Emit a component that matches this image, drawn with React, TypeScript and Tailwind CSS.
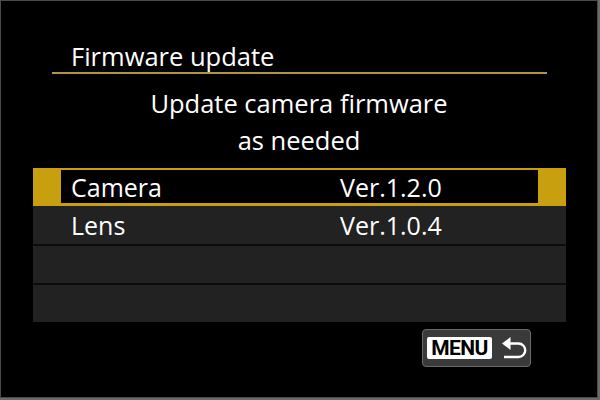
import React from "react";

function ReturnIcon() {
  return (
    <svg width="28" height="24" viewBox="0 0 28 24" className="block">
      <path d="M4 7.5 H17.5 A6.75 6.75 0 0 1 17.5 21 H3" fill="none" stroke="#ffffff" strokeWidth="2.4" />
      <path d="M1 7.5 L9.5 1 L9.5 14 Z" fill="#ffffff" />
    </svg>
  );
}

export default function App() {
  const font = { fontFamily: '"Open Sans", "Noto Sans", sans-serif' };
  return (
    <div className="w-[600px] h-[400px] bg-[#6a6a6a] pr-[2px] pb-[2px]">
      <div
        className="w-[598px] h-[398px] bg-black border border-[#4a4a4a] flex flex-col text-white"
        style={font}
      >
        <div className="pl-[70px] pt-[39px] h-[71px] text-[25.5px] leading-[32px]">
          Firmware update
        </div>
        <div className="ml-[51px] w-[495px] h-[2px] bg-[#b0963e]" />
        <div className="mt-[11px] flex flex-col items-center text-[25.5px] leading-[37px]">
          <div>Update camera firmware</div>
          <div>as needed</div>
        </div>
        <div className="ml-[32px] mt-[9px] w-[533px] flex flex-col">
          <div className="h-[38px] bg-[#c8a00f] flex pt-[2px] pb-[3px] px-[28px]">
            <div className="flex-1 bg-black flex items-center text-[25px] leading-[32px]">
              <div className="w-[279px] pl-[10px]">Camera</div>
              <div>Ver.1.2.0</div>
            </div>
          </div>
          <div className="h-[38px] bg-[#222222] flex items-center px-[28px] text-[25px] leading-[32px]">
            <div className="w-[279px] pl-[10px]">Lens</div>
            <div>Ver.1.0.4</div>
          </div>
          <div className="h-[2px] bg-[#0c0c0c]" />
          <div className="h-[37px] bg-[#222222]" />
          <div className="h-[2px] bg-[#0c0c0c]" />
          <div className="h-[37px] bg-[#222222]" />
        </div>
        <div className="flex justify-end pr-[66px] mt-[7px]">
          <div className="w-[109px] h-[38px] rounded-[4px] bg-[#3a3a3a] border border-[#6a6a6a] flex items-center pl-[4px] gap-[9px]">
            <div
              className="w-[65px] h-[22px] rounded-[2px] bg-white text-black font-bold text-[21px] leading-[22px] flex items-center justify-center tracking-[-0.6px]"
              style={{ fontFamily: '"Roboto", "Liberation Sans", sans-serif' }}
            >
              MENU
            </div>
            <ReturnIcon />
          </div>
        </div>
      </div>
    </div>
  );
}
